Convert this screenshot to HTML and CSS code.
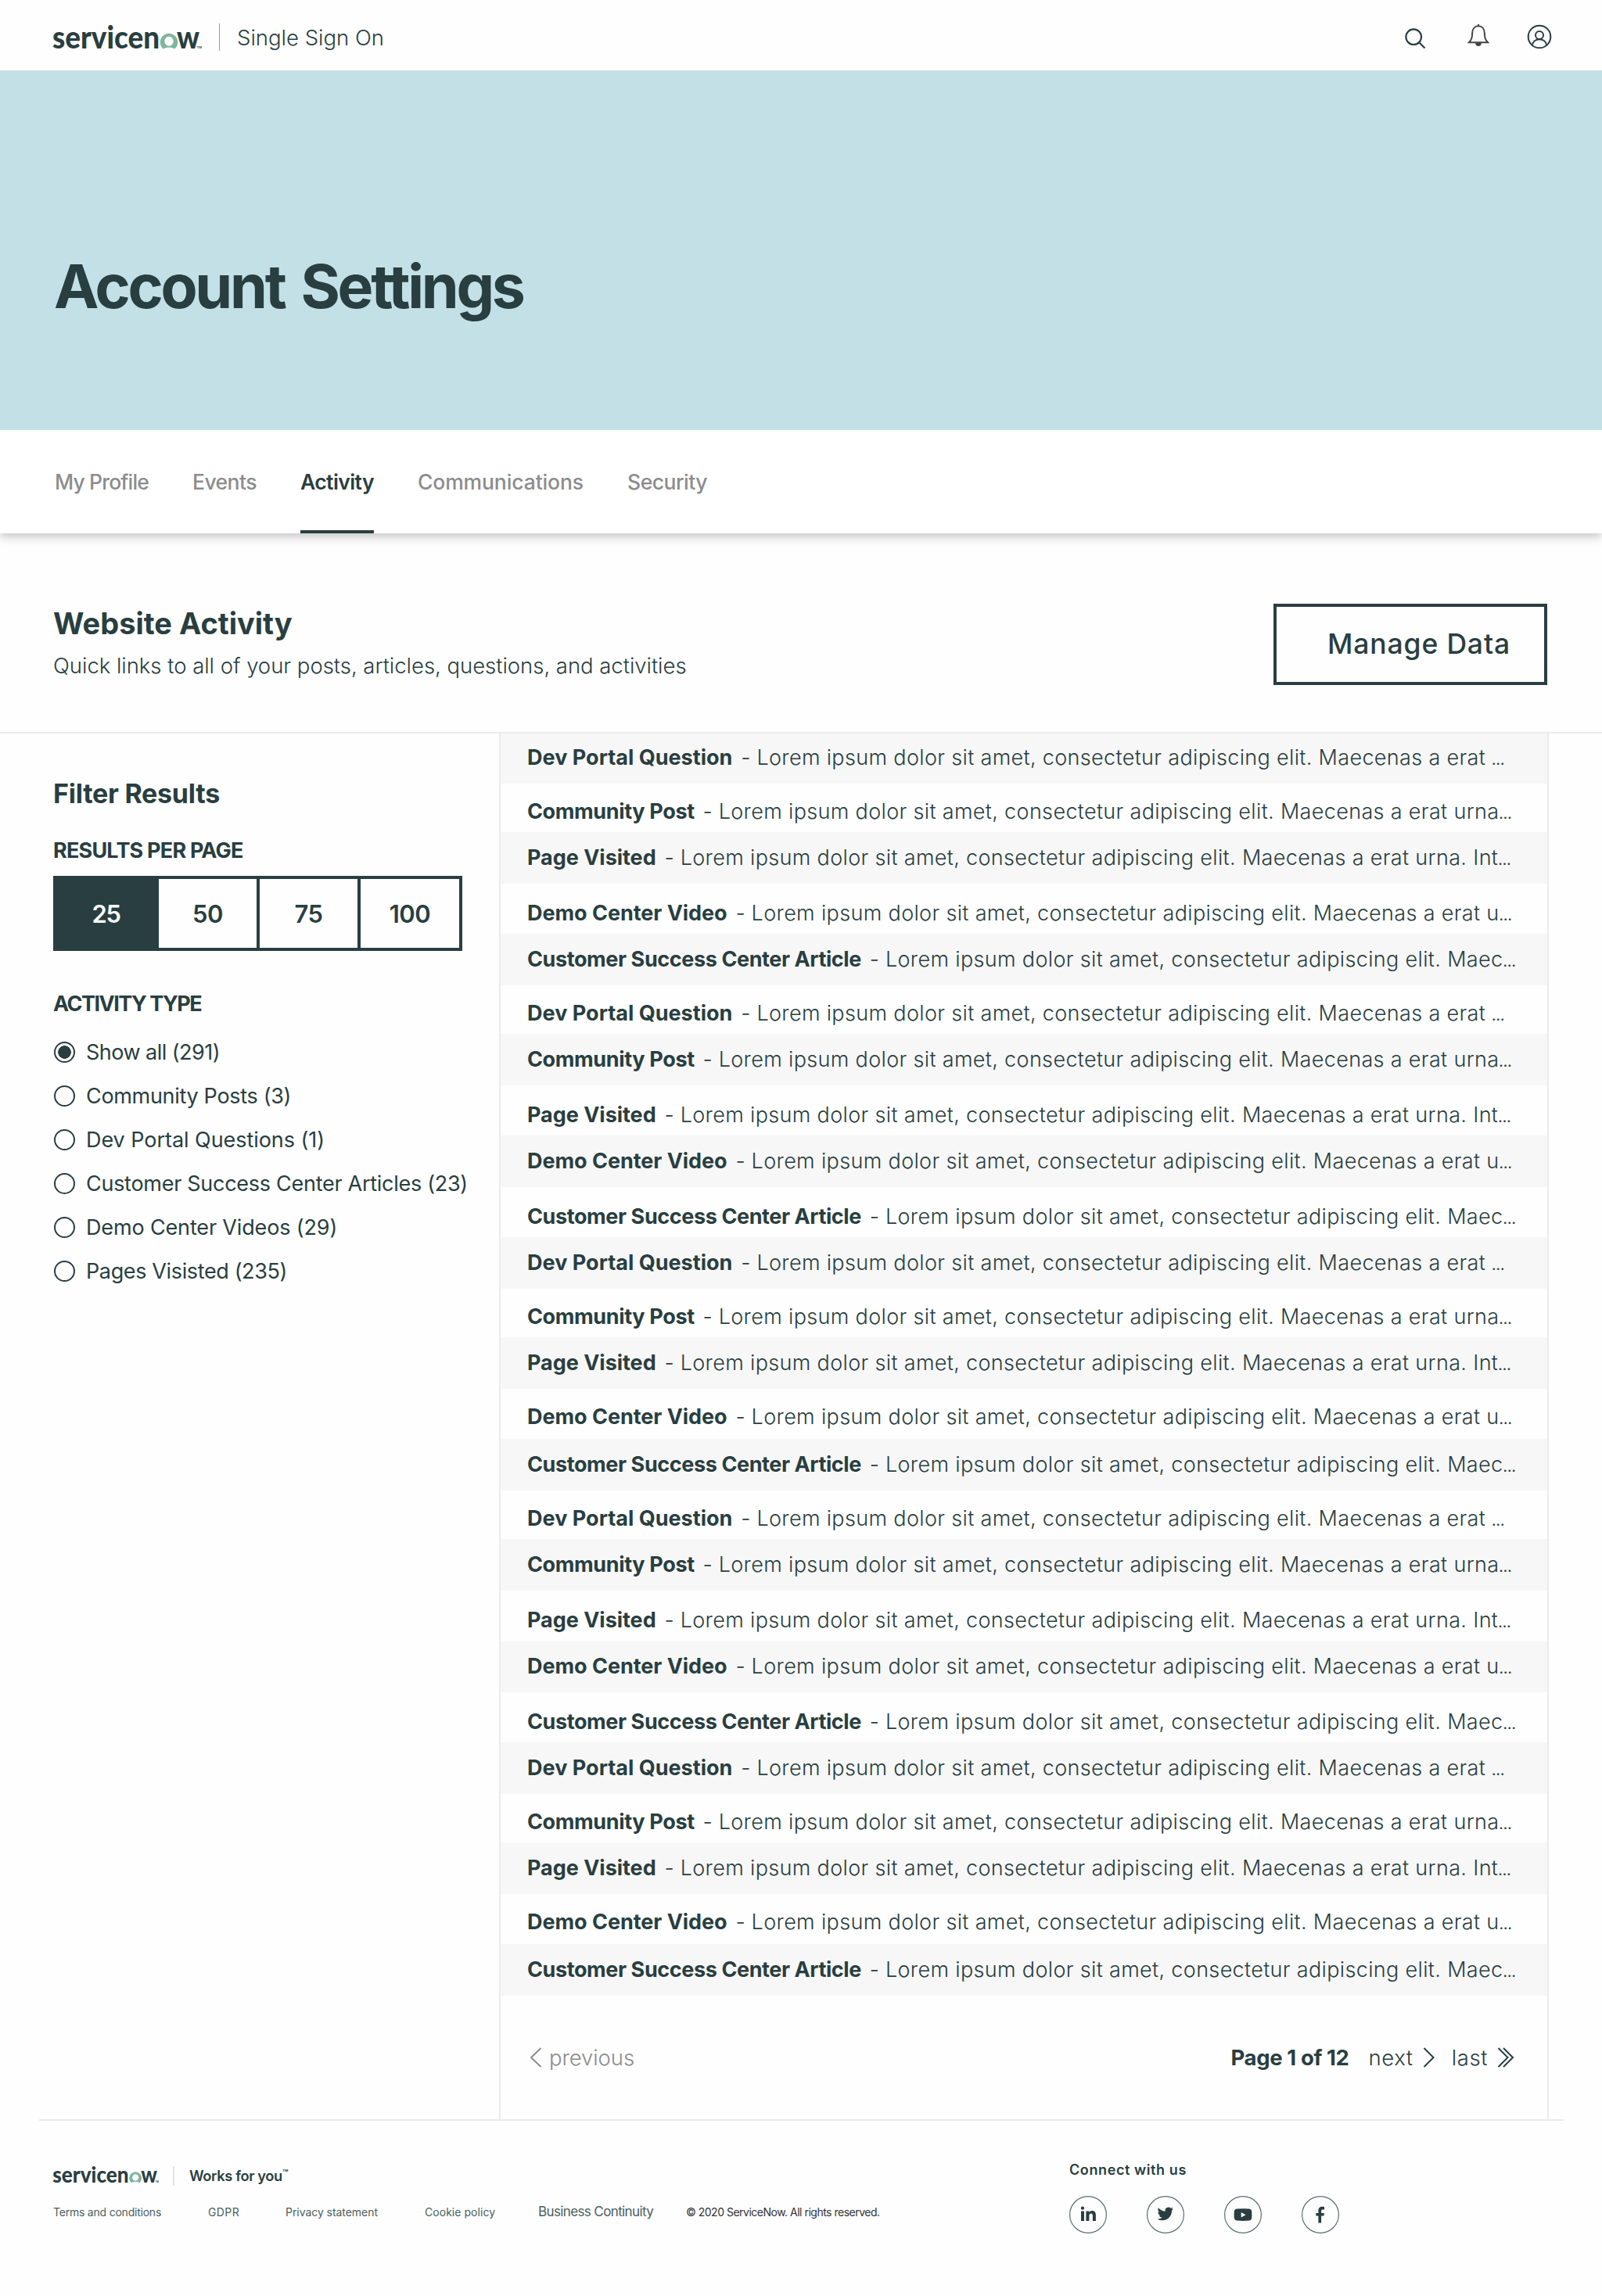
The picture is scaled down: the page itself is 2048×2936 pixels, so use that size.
FILE: index.html
```
<!DOCTYPE html>
<html lang="en">
<head>
<meta charset="utf-8">
<title>Account Settings</title>
<link rel="stylesheet" href="styles.css">
</head>
<body>
<header class="topbar">
  <svg class="logo" viewBox="0 0 190 36" role="img" aria-label="servicenow">
    <text class="logo-text" x="-1" y="32" textLength="137" lengthAdjust="spacingAndGlyphs">servicen</text>
    <path class="logo-o" fill-rule="evenodd" d="M140.8 32.6A11.2 11.2 0 1 1 155.2 32.6C152.500 30.200 143.500 30.200 140.800 32.600ZM148 16.800a5.600 6 0 1 0 .01 0Z"/>
    <text class="logo-text" x="158" y="32" textLength="29" lengthAdjust="spacingAndGlyphs">w</text>
    <text class="logo-tm" x="183.500" y="32">TM</text>
  </svg>
  <span class="divider"></span>
  <span class="product">Single Sign On</span>
  <nav class="tools">
    <svg class="tool search" viewBox="0 0 28 28"><circle cx="12.200" cy="12.200" r="9.800"/><path d="M19.200 19.200L26.500 26.500"/></svg>
    <svg class="tool bell" viewBox="0 0 28 30"><path d="M2 24.200C5.500 20.500 6 18 6.200 12C6.400 6.500 9.500 3.300 14 3.300S21.600 6.500 21.800 12C22 18 22.500 20.500 26 24.200ZM14 1v2"/><path class="clapper" d="M10.200 25h7.600a3.800 4 0 0 1-7.600 0Z"/></svg>
    <svg class="tool user" viewBox="0 0 32 32"><circle cx="16" cy="16" r="14.300"/><circle cx="16" cy="14" r="5"/><path d="M7 26.500C8 16.800 24 16.800 25 26.500"/></svg>
  </nav>
</header>

<section class="hero"><h1>Account Settings</h1></section>

<nav class="tabs">
  <a class="tab t-profile">My Profile</a>
  <a class="tab t-events">Events</a>
  <a class="tab t-activity active">Activity</a>
  <a class="tab t-comms">Communications</a>
  <a class="tab t-security">Security</a>
</nav>

<section class="intro">
  <div>
    <h2>Website Activity</h2>
    <p>Quick links to all of your posts, articles, questions, and activities</p>
  </div>
  <button class="manage">Manage Data</button>
</section>

<main class="main">
  <aside class="filters">
    <h3>Filter Results</h3>
    <h4 class="per-page">RESULTS PER PAGE</h4>
    <div class="segments">
      <span class="seg on">25</span><span class="seg">50</span><span class="seg">75</span><span class="seg">100</span>
    </div>
    <h4 class="type">ACTIVITY TYPE</h4>
    <ul class="options">
      <li class="o1"><i class="radio checked"></i>Show all (291)</li>
      <li class="o2"><i class="radio"></i>Community Posts (3)</li>
      <li class="o3"><i class="radio"></i>Dev Portal Questions (1)</li>
      <li class="o4"><i class="radio"></i>Customer Success Center Articles (23)</li>
      <li class="o5"><i class="radio"></i>Demo Center Videos (29)</li>
      <li class="o6"><i class="radio"></i>Pages Visisted (235)</li>
    </ul>
  </aside>
  <section class="results">
    <ul class="rows">
      <li class="shade first"><b class="dev">Dev Portal Question</b><i>-</i><p>Lorem ipsum dolor sit amet, consectetur adipiscing elit. Maecenas a erat <s>…</s></p></li>
      <li class="short"><b class="com">Community Post</b><i>-</i><p>Lorem ipsum dolor sit amet, consectetur adipiscing elit. Maecenas a erat urna<s>…</s></p></li>
      <li class="shade"><b class="page">Page Visited</b><i>-</i><p>Lorem ipsum dolor sit amet, consectetur adipiscing elit. Maecenas a erat urna. Int<s>…</s></p></li>
      <li class="tall"><b class="demo">Demo Center Video</b><i>-</i><p>Lorem ipsum dolor sit amet, consectetur adipiscing elit. Maecenas a erat u<s>…</s></p></li>
      <li class="shade"><b class="cust">Customer Success Center Article</b><i>-</i><p>Lorem ipsum dolor sit amet, consectetur adipiscing elit. Maec<s>…</s></p></li>
      <li class="short"><b class="dev">Dev Portal Question</b><i>-</i><p>Lorem ipsum dolor sit amet, consectetur adipiscing elit. Maecenas a erat <s>…</s></p></li>
      <li class="shade"><b class="com">Community Post</b><i>-</i><p>Lorem ipsum dolor sit amet, consectetur adipiscing elit. Maecenas a erat urna<s>…</s></p></li>
      <li class="tall"><b class="page">Page Visited</b><i>-</i><p>Lorem ipsum dolor sit amet, consectetur adipiscing elit. Maecenas a erat urna. Int<s>…</s></p></li>
      <li class="shade"><b class="demo">Demo Center Video</b><i>-</i><p>Lorem ipsum dolor sit amet, consectetur adipiscing elit. Maecenas a erat u<s>…</s></p></li>
      <li class="tall"><b class="cust">Customer Success Center Article</b><i>-</i><p>Lorem ipsum dolor sit amet, consectetur adipiscing elit. Maec<s>…</s></p></li>
      <li class="shade"><b class="dev">Dev Portal Question</b><i>-</i><p>Lorem ipsum dolor sit amet, consectetur adipiscing elit. Maecenas a erat <s>…</s></p></li>
      <li class="short"><b class="com">Community Post</b><i>-</i><p>Lorem ipsum dolor sit amet, consectetur adipiscing elit. Maecenas a erat urna<s>…</s></p></li>
      <li class="shade"><b class="page">Page Visited</b><i>-</i><p>Lorem ipsum dolor sit amet, consectetur adipiscing elit. Maecenas a erat urna. Int<s>…</s></p></li>
      <li class="mid"><b class="demo">Demo Center Video</b><i>-</i><p>Lorem ipsum dolor sit amet, consectetur adipiscing elit. Maecenas a erat u<s>…</s></p></li>
      <li class="shade"><b class="cust">Customer Success Center Article</b><i>-</i><p>Lorem ipsum dolor sit amet, consectetur adipiscing elit. Maec<s>…</s></p></li>
      <li class="short"><b class="dev">Dev Portal Question</b><i>-</i><p>Lorem ipsum dolor sit amet, consectetur adipiscing elit. Maecenas a erat <s>…</s></p></li>
      <li class="shade"><b class="com">Community Post</b><i>-</i><p>Lorem ipsum dolor sit amet, consectetur adipiscing elit. Maecenas a erat urna<s>…</s></p></li>
      <li class="tall"><b class="page">Page Visited</b><i>-</i><p>Lorem ipsum dolor sit amet, consectetur adipiscing elit. Maecenas a erat urna. Int<s>…</s></p></li>
      <li class="shade"><b class="demo">Demo Center Video</b><i>-</i><p>Lorem ipsum dolor sit amet, consectetur adipiscing elit. Maecenas a erat u<s>…</s></p></li>
      <li class="tall"><b class="cust">Customer Success Center Article</b><i>-</i><p>Lorem ipsum dolor sit amet, consectetur adipiscing elit. Maec<s>…</s></p></li>
      <li class="shade"><b class="dev">Dev Portal Question</b><i>-</i><p>Lorem ipsum dolor sit amet, consectetur adipiscing elit. Maecenas a erat <s>…</s></p></li>
      <li class="short"><b class="com">Community Post</b><i>-</i><p>Lorem ipsum dolor sit amet, consectetur adipiscing elit. Maecenas a erat urna<s>…</s></p></li>
      <li class="shade"><b class="page">Page Visited</b><i>-</i><p>Lorem ipsum dolor sit amet, consectetur adipiscing elit. Maecenas a erat urna. Int<s>…</s></p></li>
      <li class="mid"><b class="demo">Demo Center Video</b><i>-</i><p>Lorem ipsum dolor sit amet, consectetur adipiscing elit. Maecenas a erat u<s>…</s></p></li>
      <li class="shade"><b class="cust">Customer Success Center Article</b><i>-</i><p>Lorem ipsum dolor sit amet, consectetur adipiscing elit. Maec<s>…</s></p></li>
    </ul>
    <div class="pager">
      <a class="prev"><svg viewBox="0 0 16 26"><path d="M14.500 1L2 13L14.500 25"/></svg>previous</a>
      <b>Page 1 of 12</b>
      <a class="next">next<svg viewBox="0 0 16 26"><path d="M1.500 1L13.500 13L1.500 25"/></svg></a>
      <a class="last">last<svg viewBox="0 0 22 26"><path d="M1.500 1L13.500 13L1.500 25M8 1L20 13L8 25"/></svg></a>
    </div>
  </section>
</main>

<footer class="footer">
  <div class="legal">
    <div class="brand">
      <svg class="logo-small" viewBox="0 0 190 36" role="img" aria-label="servicenow">
        <text class="logo-text" x="-1" y="32" textLength="137" lengthAdjust="spacingAndGlyphs">servicen</text>
        <path class="logo-o" fill-rule="evenodd" d="M140.8 32.6A11.2 11.2 0 1 1 155.2 32.6C152.500 30.200 143.500 30.200 140.800 32.600ZM148 16.800a5.600 6 0 1 0 .01 0Z"/>
        <text class="logo-text" x="158" y="32" textLength="29" lengthAdjust="spacingAndGlyphs">w</text>
        <text class="logo-tm" x="183.500" y="32">TM</text>
      </svg>
      <span class="brand-line"></span>
      <span class="slogan">Works for you<sup>™</sup></span>
    </div>
    <div class="links">
      <a class="l-terms">Terms and conditions</a>
      <a class="l-gdpr">GDPR</a>
      <a class="l-privacy">Privacy statement</a>
      <a class="l-cookie">Cookie policy</a>
      <a class="l-business">Business Continuity</a>
      <span class="copyright">© 2020 ServiceNow. All rights reserved.</span>
    </div>
  </div>
  <div class="connect">
    <span class="connect-title">Connect with us</span>
    <div class="socials">
      <svg viewBox="0 0 48 48"><circle cx="24" cy="24" r="23.400"/><path d="M15 19.400h4V32h-4ZM17 13.400a2.200 2.200 0 1 1 0 4.400a2.200 2.200 0 0 1 0-4.400ZM21.400 19.400h3.900v1.800c.7-1.200 2-2.100 3.900-2.100c3.700 0 4.700 2.400 4.700 5.800V32h-4v-6.300c0-1.700-.2-3.200-2.100-3.200s-2.400 1.500-2.400 3.100V32h-4Z"/></svg>
      <svg viewBox="0 0 48 48"><circle cx="24" cy="24" r="23.400"/><path transform="translate(13.500 12.600) scale(.86)" d="M23.950 4.570a10 10 0 0 1-2.820.77 4.960 4.960 0 0 0 2.160-2.720c-.95.550-2 .95-3.130 1.180a4.920 4.920 0 0 0-8.380 4.480C7.690 8.090 4.070 6.130 1.640 3.160a4.820 4.820 0 0 0-.67 2.480c0 1.710.87 3.210 2.190 4.100a4.900 4.900 0 0 1-2.230-.62v.06a4.920 4.920 0 0 0 3.950 4.830 5 5 0 0 1-2.210.080 4.940 4.940 0 0 0 4.600 3.420A9.870 9.870 0 0 1 0 19.540a13.990 13.990 0 0 0 7.560 2.210c9.050 0 14-7.500 14-13.980 0-.21 0-.42-.02-.63a9.940 9.940 0 0 0 2.410-2.570Z"/></svg>
      <svg viewBox="0 0 48 48"><circle cx="24" cy="24" r="23.400"/><path fill-rule="evenodd" d="M16.500 16.600Q24 15.900 31.500 16.600Q34.900 16.900 35.200 20Q35.600 24.200 35.200 28.200Q34.900 31.200 31.500 31.600Q24 32.200 16.500 31.600Q13.100 31.200 12.800 28.200Q12.400 24.200 12.800 20Q13.100 16.900 16.500 16.600ZM21.700 20.900V27.500L27.500 24.200Z"/></svg>
      <svg viewBox="0 0 48 48"><circle cx="24" cy="24" r="23.400"/><path d="M21.400 34.500V25.500H18.300V21.900H21.400V19.200C21.400 15.500 23.300 13.800 26.400 13.800C27.600 13.800 28.500 13.900 29 14V17.400H27C25.500 17.400 25.100 18.200 25.100 19.400V21.900H28.900L28.400 25.500H25.100V34.500Z"/></svg>
    </div>
  </div>
</footer>
</body>
</html>
```
FILE: styles.css
```
:root {
  --ink: #293e40;
  --line: #ebebeb;
  --muted: #8c8c8c;
}
* { box-sizing: border-box; }
body {
  margin: 0;
  width: 2048px;
  height: 2936px;
  background: #fefefe;
  color: var(--ink);
  font-family: Inter, "Liberation Sans", sans-serif;
  font-weight: 300;
  white-space: nowrap;
}
h1, h2, h3, h4, p, ul { margin: 0; padding: 0; }
ul { list-style: none; }

/* Top bar */
.topbar {
  display: flex;
  align-items: center;
  height: 90px;
  padding: 5px 64px 0 68px;
}
.logo { width: 190px; height: 36px; overflow: visible; }
.logo-text { font-family: Lato, sans-serif; font-weight: 900; font-size: 39px; fill: var(--ink); }
.logo-o { fill: #81b5a1; }
.logo-tm { font-size: 4px; font-weight: 600; fill: var(--ink); }
.divider { width: 1px; height: 35px; margin-left: 22px; background: #93a0a1; }
.product { margin-left: 22px; font-size: 27.5px; }
.tools { display: flex; align-items: center; margin-left: auto; }
.tool { fill: none; stroke: var(--ink); stroke-width: 2; }
.search { width: 28px; height: 28px; margin: 3px 53px 0 0; stroke-width: 2.2; }
.bell { width: 28px; height: 30px; margin: -5px 48px 0 0; stroke: #444; }
.bell .clapper { fill: #444; stroke: none; }
.user { width: 32px; height: 32px; margin-top: -1px; }

/* Hero */
.hero { position: relative; z-index: 1; height: 460px; padding: 230px 0 0 69px; background: #c3e0e6; }
h1 { font-size: 77px; line-height: 92px; font-weight: 700; letter-spacing: -3.3px; word-spacing: 6px; }

/* Tabs */
.tabs {
  display: flex;
  gap: 56px;
  height: 132px;
  padding-left: 70px;
  background: #fff;
  box-shadow: 0 4px 12px rgba(0, 0, 0, .24);
}
.tab { line-height: 133px; height: 132px; font-size: 26.5px; font-weight: 500; color: var(--muted); }
.tab.active { font-weight: 600; color: var(--ink); box-shadow: inset 0 -4px var(--ink); }
.t-profile { letter-spacing: -.85px; }
.t-events { letter-spacing: -.55px; }
.t-activity { letter-spacing: -.58px; }
.t-comms { letter-spacing: -.11px; }
.t-security { letter-spacing: -.5px; }

/* Section heading */
.intro {
  display: flex;
  justify-content: space-between;
  align-items: flex-start;
  height: 256px;
  padding: 86px 70px 0 68px;
  border-bottom: 2px solid var(--line);
}
h2 { font-size: 38px; line-height: 59px; font-weight: 700; }
.intro p { font-size: 27.5px; line-height: 48px; letter-spacing: -.03px; }
.manage {
  width: 350px;
  height: 104px;
  margin-top: 4px;
  padding: 0 43px 1px 0;
  border: 4px solid var(--ink);
  background: none;
  color: inherit;
  font: 500 35.5px Inter, sans-serif;
  letter-spacing: .85px;
  text-align: right;
}

/* Two columns */
.main { display: grid; grid-template-columns: 638px 1342px; height: 1772px; }
.filters { padding: 55px 0 0 68px; }
h3 { font-size: 34px; line-height: 44px; font-weight: 700; letter-spacing: -.25px; }
h4 { font-size: 27px; line-height: 40px; font-weight: 700; }
.per-page { margin-top: 31px; letter-spacing: -.8px; }
.type { margin-top: 48px; letter-spacing: -1.5px; }
.segments {
  display: grid;
  grid-template-columns: 131px 129px 129px 126px;
  width: 523px;
  height: 96px;
  margin-top: 12px;
  border: 4px solid var(--ink);
}
.seg {
  display: grid;
  place-items: center;
  border-right: 4px solid var(--ink);
  font-size: 31px;
  font-weight: 600;
  letter-spacing: -.5px;
}
.seg:last-child { border-right: 0; }
.seg.on { background: var(--ink); color: #fff; letter-spacing: -1.5px; }
.options { margin-top: 13px; }
.options li { display: flex; align-items: center; height: 56.1px; font-size: 27px; font-weight: 400; }
.radio { width: 27px; height: 27px; margin: 0 14px 0 1px; border: 2px solid var(--ink); border-radius: 50%; }
.radio.checked { background: radial-gradient(circle, var(--ink) 8px, transparent 8.6px); }
.o1 { letter-spacing: -.53px; }
.o2 { letter-spacing: -.32px; }
.o3 { letter-spacing: -.05px; }
.o4 { letter-spacing: -.28px; }
.o5 { letter-spacing: -.15px; }
.o6 { letter-spacing: -.37px; }

/* Result rows */
.results { border: solid var(--line); border-width: 0 2px; }
.rows li { display: flex; padding-left: 34px; font-size: 27px; line-height: 56px; }
.rows b { font-weight: 700; }
.rows i { width: 31px; padding-left: 3px; text-align: center; font-style: normal; }
.rows p { letter-spacing: .34px; }
.rows s { font-size: 18px; line-height: 0; text-decoration: none; font-weight: 500; letter-spacing: 0; }
.rows .shade { height: 66px; line-height: 66px; background: #f7f7f7; }
.rows .first { height: 64px; line-height: 62px; }
.rows .short { height: 62px; padding-top: 8px; }
.rows .mid { height: 64px; padding-top: 8px; }
.rows .tall { height: 64px; padding-top: 10px; }
.dev { letter-spacing: .02px; }
.com { letter-spacing: -.36px; }
.page { letter-spacing: -.03px; }
.demo { letter-spacing: -.04px; }
.cust { letter-spacing: -.4px; }

/* Pager */
.pager { display: flex; align-items: center; height: 158px; padding: 0 42px 0 37px; font-size: 27.5px; }
.pager a { display: flex; align-items: center; }
.pager svg { width: 16px; height: 26px; fill: none; stroke: currentColor; stroke-width: 2; }
.pager b { font-weight: 700; letter-spacing: -.38px; }
.prev { gap: 9px; margin-right: auto; color: var(--muted); letter-spacing: -.1px; }
.next { gap: 12px; margin-left: 25px; letter-spacing: .6px; }
.last { gap: 12px; margin-left: 21px; letter-spacing: .6px; }
.pager .last svg { width: 22px; }

/* Footer */
.footer {
  display: flex;
  height: 226px;
  margin: 0 48px 0 50px;
  border-top: 2px solid var(--line);
}
.legal { width: 1317px; padding: 52px 0 0 18px; }
.brand { display: flex; align-items: center; height: 36px; }
.logo-small { width: 135px; height: 26px; margin-bottom: 3px; overflow: visible; }
.brand-line { width: 2px; height: 25px; margin-left: 18px; background: #e4e4e4; }
.slogan { margin-left: 19px; font-size: 18.3px; font-weight: 600; letter-spacing: -.38px; }
.slogan sup { font-size: 12px; line-height: 0; vertical-align: 6px; }
.links { display: flex; align-items: baseline; height: 40px; margin-top: 18px; font-size: 14px; line-height: 20px; font-weight: 400; color: #4c5e60; }
.l-terms { width: 198px; letter-spacing: -.22px; }
.l-gdpr { width: 99px; letter-spacing: .38px; }
.l-privacy { width: 178px; letter-spacing: -.05px; }
.l-cookie { width: 145px; letter-spacing: .04px; }
.l-business { width: 189px; font-size: 17px; letter-spacing: -.62px; }
.copyright { font-size: 14px; letter-spacing: -.5px; color: #333; }
.connect { padding-top: 50px; }
.connect-title { display: block; font-size: 18px; line-height: 26px; font-weight: 600; letter-spacing: .6px; }
.socials { display: flex; gap: 51px; margin-top: 20px; }
.socials svg { width: 48px; height: 48px; fill: var(--ink); }
.socials circle { fill: none; stroke: #5c6c6e; stroke-width: 1.2; }
```
